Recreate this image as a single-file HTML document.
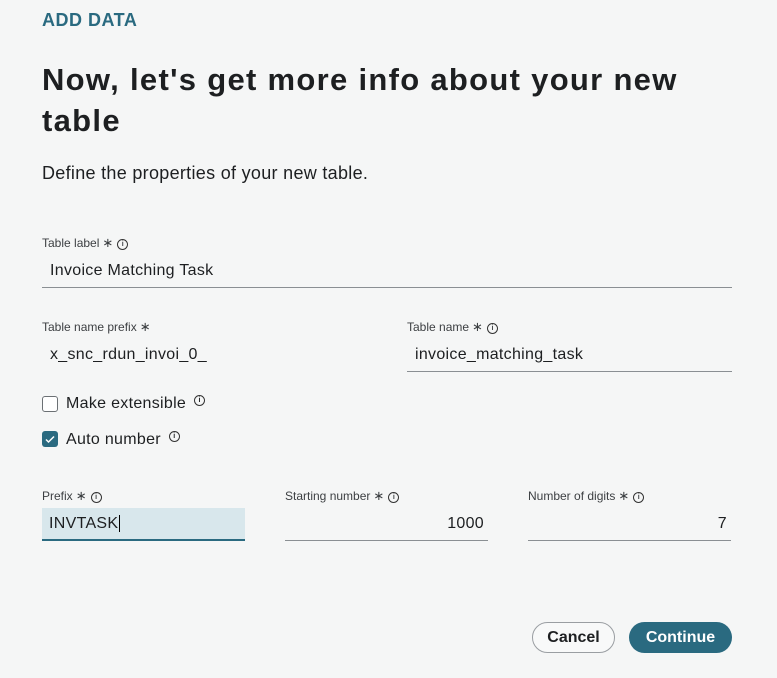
<!DOCTYPE html>
<html><head><style>
body{margin:0;width:777px;height:678px;background:#f5f6f6;font-family:"Liberation Sans",sans-serif;color:#1d1f21;position:relative;overflow:hidden}
.a{position:absolute;white-space:nowrap}
.lbl{font-size:12px;color:#3c3f42}
.val{font-size:16px;color:#1d1f21;letter-spacing:.3px}
.line{position:absolute;height:1px;background:#8a8f93}
.i{display:inline-block;width:9px;height:9px;border:1px solid #333;border-radius:50%;font-size:7px;line-height:9px;text-align:center;vertical-align:1px;margin-left:4px;font-weight:bold}
.s{font-size:13px;margin-left:3px}
</style></head><body>
<div class="a" style="left:42px;top:10px;font-size:18px;font-weight:bold;color:#2a6a80;letter-spacing:.5px">ADD DATA</div>
<div class="a" style="left:42px;top:59px;font-size:31px;font-weight:bold;line-height:41px;white-space:normal;width:700px;letter-spacing:1.3px">Now, let's get more info about your new table</div>
<div class="a" style="left:42px;top:163px;font-size:18px;letter-spacing:.3px">Define the properties of your new table.</div>

<div class="a lbl" style="left:42px;top:235px">Table label<span class="s">∗</span><span class="i">i</span></div>
<div class="a val" style="left:50px;top:262px">Invoice Matching Task</div>
<div class="line" style="left:42px;top:287px;width:690px"></div>

<div class="a lbl" style="left:42px;top:319px">Table name prefix<span class="s">∗</span></div>
<div class="a val" style="left:50px;top:346px">x_snc_rdun_invoi_0_</div>
<div class="a lbl" style="left:407px;top:319px">Table name<span class="s">∗</span><span class="i">i</span></div>
<div class="a val" style="left:415px;top:346px">invoice_matching_task</div>
<div class="line" style="left:407px;top:371px;width:325px"></div>

<div class="a" style="left:42px;top:396px;width:14px;height:14px;border:1px solid #6b7074;border-radius:3px;background:#fff"></div>
<div class="a val" style="left:66px;top:395px">Make extensible<span class="i" style="vertical-align:6px;margin-left:8px">i</span></div>
<div class="a" style="left:42px;top:431px;width:16px;height:16px;border-radius:3px;background:#2a6a80"><svg width="16" height="16"><path d="M4 8.5l2.5 2.5 5.5-5.5" stroke="#fff" stroke-width="1.5" fill="none"/></svg></div>
<div class="a val" style="left:66px;top:431px">Auto number<span class="i" style="vertical-align:6px;margin-left:8px">i</span></div>

<div class="a lbl" style="left:42px;top:488px">Prefix<span class="s">∗</span><span class="i">i</span></div>
<div class="a" style="left:42px;top:508px;width:203px;height:33px;background:#d8e7ec;border-bottom:2px solid #2a6a80;box-sizing:border-box"></div>
<div class="a val" style="left:49px;top:515px">INVTASK<span style="border-left:1px solid #000;margin-left:1px"></span></div>

<div class="a lbl" style="left:285px;top:488px">Starting number<span class="s">∗</span><span class="i">i</span></div>
<div class="a val" style="left:285px;top:515px;width:199px;text-align:right">1000</div>
<div class="line" style="left:285px;top:540px;width:203px"></div>

<div class="a lbl" style="left:528px;top:488px">Number of digits<span class="s">∗</span><span class="i">i</span></div>
<div class="a val" style="left:528px;top:515px;width:199px;text-align:right">7</div>
<div class="line" style="left:528px;top:540px;width:203px"></div>

<div class="a" style="left:532px;top:622px;width:83px;height:31px;border:1px solid #9a9ea2;border-radius:16px;box-sizing:border-box;text-align:center;line-height:29px;font-size:16px;font-weight:bold;background:#f8f9f9">Cancel</div>
<div class="a" style="left:629px;top:622px;width:103px;height:31px;border-radius:16px;background:#2a6a80;color:#fff;text-align:center;line-height:31px;font-size:16px;font-weight:bold">Continue</div>
</body></html>
